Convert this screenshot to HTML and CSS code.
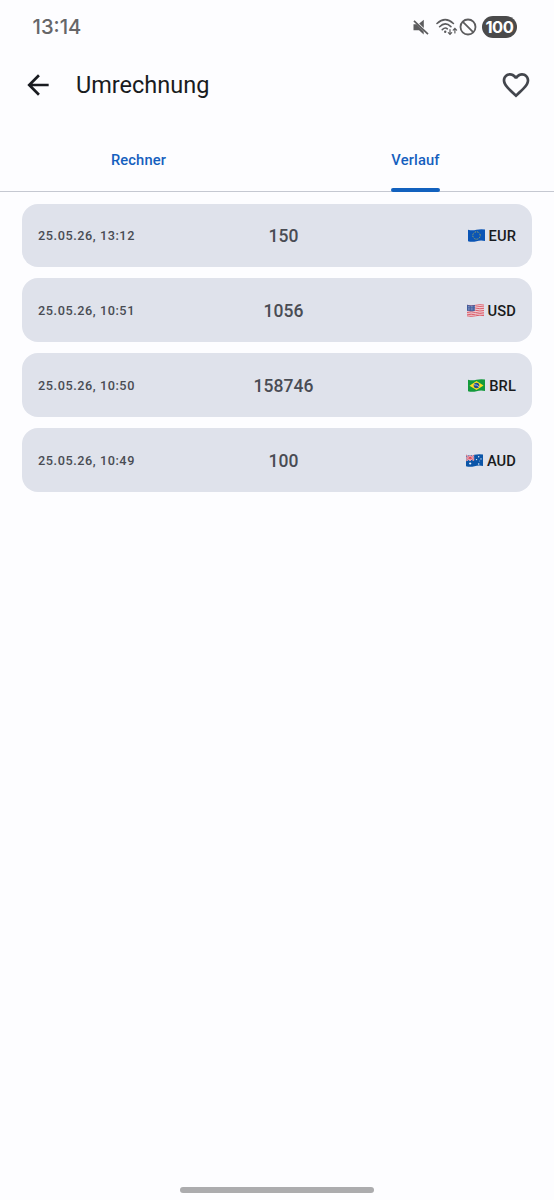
FILE: index.html
```
<!DOCTYPE html>
<html lang="de">
<head>
<meta charset="utf-8">
<title>Umrechnung</title>
<link rel="stylesheet" href="styles.css">
</head>
<body>
<div class="screen">
  <header class="status">
    <span class="clock">13:14</span>
    <div class="status-icons">
      <svg class="mute" width="16" height="17" viewBox="0 0 16 17"><path d="M.5 5.2h3.2l7 7.2v3L6 11.3H.5zM6.2 4.4l4.6-3.7v8.3z" fill="#5c5c5e"/><path d="M1 1.8l14 13.4" stroke="#5c5c5e" stroke-width="1.7"/></svg>
      <svg class="wifi" width="22" height="18" viewBox="0 0 22 18"><g fill="none" stroke="#5c5c5e" stroke-width="1.6" stroke-linecap="round"><path d="M1 5.5Q9.2-2.4 17.4 5.5M3.6 8.7Q9.2 3.1 14.9 8.6M6.3 11.6Q9.2 8.9 11.3 10.8"/><path stroke-width="1.2" d="M14 11.6v4.8m-1.7-1.7 1.7 1.7 1.7-1.7M18.9 15v-4.6m-1.7 1.7 1.7-1.7 1.7 1.7"/></g><circle cx="9.2" cy="13.8" r="1.2" fill="#5c5c5e"/></svg>
      <svg class="block" width="18" height="18" viewBox="0 0 18 18"><g fill="none" stroke="#5c5c5e" stroke-width="1.8"><circle cx="9" cy="9" r="7.5"/><path d="M3.6 3.6l10.8 10.8"/></g></svg>
      <span class="battery">100</span>
    </div>
  </header>
  <div class="appbar">
    <svg width="32" height="32" viewBox="0 0 24 24"><path fill="#191b20" d="M20 11H7.83l5.59-5.59L12 4l-8 8 8 8 1.41-1.41L7.83 13H20z"/></svg>
    <h1 class="title">Umrechnung</h1>
    <svg width="32" height="32" viewBox="0 0 24 24"><path fill="#43464d" d="M16.5 3c-1.74 0-3.41.81-4.5 2.09C10.91 3.81 9.24 3 7.5 3 4.42 3 2 5.42 2 8.5c0 3.78 3.4 6.86 8.55 11.54L12 21.35l1.45-1.32C18.6 15.36 22 12.28 22 8.5 22 5.42 19.58 3 16.5 3zm-4.4 15.55-.1.1-.1-.1C7.14 14.24 4 11.39 4 8.5 4 6.5 5.5 5 7.5 5c1.54 0 3.04.99 3.57 2.36h1.87C13.46 5.99 14.96 5 16.5 5c2 0 3.5 1.5 3.5 3.5 0 2.89-3.14 5.74-7.9 10.05z"/></svg>
  </div>
  <nav class="tabs">
    <div class="tab"><span class="tab-label">Rechner</span></div>
    <div class="tab"><span class="tab-label active">Verlauf</span></div>
  </nav>
  <main class="history">
    <div class="entry">
      <span class="date">25.05.26, 13:12</span><span class="amount">150</span>
      <span class="currency"><svg class="flag" width="17" height="13" viewBox="0 0 17 13"><path fill="#0b55b5" d="M0 .8Q4 1.9 8.5.8T17 .6v11.5q-4-1-8.5.1T0 12.2z"/><circle cx="8.5" cy="6.5" r="3.7" fill="none" stroke="#d5c343" stroke-width="1" stroke-dasharray=".8 1.137"/></svg>EUR</span>
    </div>
    <div class="entry">
      <span class="date">25.05.26, 10:51</span><span class="amount">1056</span>
      <span class="currency"><svg class="flag" width="17" height="13" viewBox="0 0 17 13"><path fill="#f3e9ed" d="M0 .8Q4 1.9 8.5.8T17 .6v11.5q-4-1-8.5.1T0 12.2z"/><g fill="none" stroke="#d95362" stroke-width=".95"><path d="M0 1.3q4 1.1 8.5 0t8.5-.2M0 3.1q4 1.1 8.5 0t8.5-.2M0 4.9Q4 6 8.5 4.9t8.5-.2M0 6.7q4 1.1 8.5 0t8.5-.2M0 8.5q4 1.1 8.5 0t8.5-.2M0 10.2q4 1.1 8.5 0t8.5-.2M0 11.8q4 1.1 8.5 0t8.5-.2"/></g><path fill="#425d9d" d="M0 .8q4 1.1 8 .1v5.8q-4 1-8 .1z"/><path d="M1 2.6h6.5M1 4.2h6.5M1 5.8h6.5" stroke="#d8def0" stroke-width=".6" stroke-dasharray=".7 .8"/></svg>USD</span>
    </div>
    <div class="entry">
      <span class="date">25.05.26, 10:50</span><span class="amount">158746</span>
      <span class="currency"><svg class="flag" width="17" height="13" viewBox="0 0 17 13"><path fill="#149a3c" d="M0 .8Q4 1.9 8.5.8T17 .6v11.5q-4-1-8.5.1T0 12.2z"/><path fill="#fddc24" d="M1.5 6.7 8.5 2l7 4.4-7 4.7z"/><circle cx="8.5" cy="6.5" r="2.8" fill="#204c91"/><path d="M6 5.7q3 0 5 2" fill="none" stroke="#dce7ef" stroke-width=".7"/></svg>BRL</span>
    </div>
    <div class="entry">
      <span class="date">25.05.26, 10:49</span><span class="amount">100</span>
      <span class="currency"><svg class="flag" width="17" height="13" viewBox="0 0 17 13"><path fill="#0b55a8" d="M0 .8Q4 1.9 8.5.8T17 .6v11.5q-4-1-8.5.1T0 12.2z"/><path d="M.2 1.2 8 6.4M8 1.2.2 6.6M4.1 1.3v5.6M0 4h8.2" stroke="#f3e6ec" stroke-width="1.7"/><path d="M.2 1.2 8 6.4M8 1.2.2 6.6M4.1 1.3v5.6M0 4h8.2" stroke="#da3e50" stroke-width=".8"/><g fill="#edf4fb"><circle cx="4.2" cy="9.5" r="1.1"/><circle cx="12.7" cy="2.7" r=".7"/><circle cx="10.5" cy="5.6" r=".7"/><circle cx="15" cy="4.9" r=".7"/><circle cx="13.7" cy="7" r=".4"/><circle cx="12.7" cy="10" r=".8"/></g></svg>AUD</span>
    </div>
  </main>
  <div class="home-handle"></div>
</div>
</body>
</html>
```
FILE: styles.css
```
* { box-sizing: border-box; }
body { margin: 0; background: #fdfdff; font-family: Roboto, "Liberation Sans", sans-serif; color: #191b20; }
svg { display: block; flex: none; }
.screen { width: 554px; height: 1200px; display: flex; flex-direction: column; }
.status { height: 54px; padding: 0 37px 0 32.5px; display: flex; align-items: center; justify-content: space-between; }
.clock { font: 500 20.2px/24px Inter, sans-serif; color: #666668; letter-spacing: 0; }
.status-icons { display: flex; align-items: center; }
.wifi { margin-left: 6.5px; }
.block { margin-left: 1px; }
.battery { width: 35px; height: 22px; margin-left: 5.5px; border-radius: 11px; background: #4a4a4b; color: #fff; font: 700 16.5px/22px Inter, sans-serif; letter-spacing: -.4px; text-align: center; }
.appbar { height: 62px; padding: 0 22px; display: flex; align-items: center; }
.title { flex: 1; margin: 0 0 0 22px; font-size: 23.5px; line-height: 32px; font-weight: 400; }
.tabs { height: 76px; display: grid; grid-template-columns: 1fr 1fr; background: linear-gradient(#c5c8d1, #c5c8d1) bottom / 100% 1.4px no-repeat; }
.tab { display: flex; justify-content: center; }
.tab-label { height: 76px; padding-top: 33px; font-size: 14.7px; line-height: 22px; font-weight: 500; letter-spacing: .15px; color: #155fbe; display: flex; flex-direction: column; justify-content: space-between; }
.active::after { content: ""; height: 4px; border-radius: 2px; background: #1261be; }
.history { flex: 1; padding: 11.5px 22px 0; display: flex; flex-direction: column; gap: 11px; }
.entry { height: 63.9px; padding: 1px 16px 0; border-radius: 16px; background: #dfe2eb; display: grid; grid-template-columns: 170px 151px 1fr; align-items: center; }
.date { font-size: 12.7px; font-weight: 500; letter-spacing: .56px; color: #494c54; }
.amount { font-size: 17.5px; font-weight: 500; letter-spacing: .05px; text-align: center; color: #494c54; }
.currency { display: flex; justify-content: flex-end; align-items: center; gap: 4px; font-size: 14.7px; font-weight: 500; letter-spacing: .1px; color: #191b20; }
.home-handle { width: 194px; height: 6px; margin: 0 auto 7px; border-radius: 3px; background: #acacae; }
```
